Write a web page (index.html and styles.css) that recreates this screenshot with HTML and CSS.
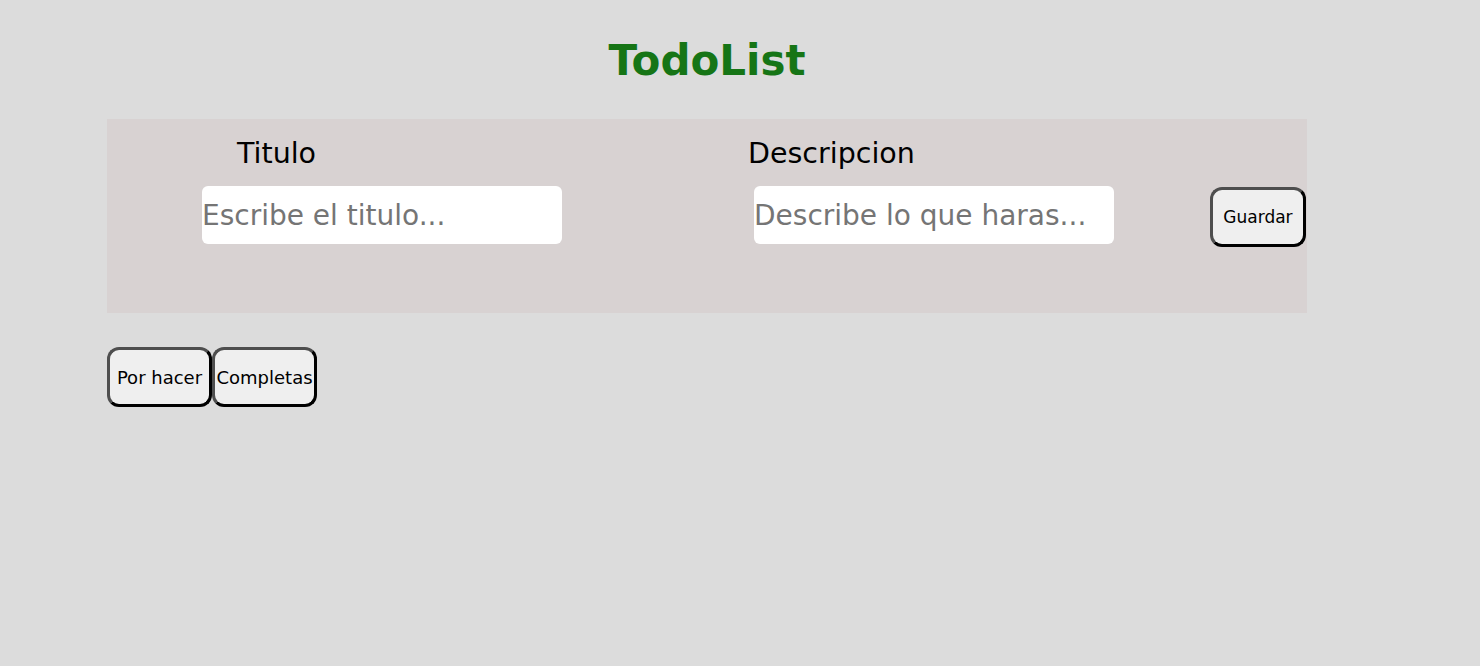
FILE: index.html
```html
<!DOCTYPE html>
<html lang="es">
<head>
<meta charset="utf-8">
<title>TodoList</title>
<link rel="stylesheet" href="styles.css">
</head>
<body>
<div class="app">
  <h1 class="title">TodoList</h1>
  <form class="form">
    <div class="field field-title">
      <label class="label label-title">Titulo</label>
      <input class="input" type="text" placeholder="Escribe el titulo...">
    </div>
    <div class="field field-desc">
      <label class="label label-desc">Descripcion</label>
      <input class="input input-desc" type="text" placeholder="Describe lo que haras...">
    </div>
    <button class="btn btn-save" type="button">Guardar</button>
  </form>
  <div class="tabs">
    <button class="btn btn-tab" type="button">Por hacer</button>
    <button class="btn btn-tab" type="button">Completas</button>
  </div>
</div>
</body>
</html>
```

FILE: styles.css
```css
html, body {
  margin: 0;
  padding: 0;
  background: #dcdcdc;
}
body {
  font-family: "Comic Sans MS", "DejaVu Sans", sans-serif;
  color: #000;
}
.app {
  width: 1200px;
  margin-left: 107px;
  padding-top: 31px;
}
.title {
  margin: 0 0 28px;
  text-align: center;
  color: #167516;
  font-size: 42px;
  line-height: 60px;
  font-weight: bold;
}
.form {
  display: flex;
  align-items: flex-start;
  background: #d8d2d2;
  height: 194px;
  box-sizing: border-box;
  padding: 17px 0 0 95px;
}
.field {
  display: flex;
  flex-direction: column;
  align-items: flex-start;
}
.label {
  font-size: 28.5px;
  line-height: 34px;
  height: 34px;
  margin-bottom: 15px;
  padding-top: 1px;
}
.label-title { margin-left: 35px; }
.field-desc { margin-left: 186px; }
.label-desc { margin-left: 0; }
.input {
  width: 360px;
  height: 58px;
  box-sizing: border-box;
  border: none;
  border-radius: 6px;
  background: #fff;
  padding: 0;
  font-family: inherit;
  font-size: 28px;
  outline: none;
}
.input-desc { margin-left: 6px; }
.input::placeholder { color: #757575; }
.btn {
  font-family: inherit;
  background: #efefef;
  border: 3px outset #555;
  border-color: #4e4e4e #000 #000 #4e4e4e;
  border-radius: 12px;
  color: #000;
  padding: 0;
  cursor: pointer;
}
.btn-save {
  margin-left: 96px;
  margin-top: 51px;
  width: 96px;
  height: 60px;
  font-size: 17px;
}
.tabs {
  display: flex;
  margin-top: 34px;
}
.btn-tab {
  height: 60px;
  width: 105px;
  font-size: 18px;
}
```
